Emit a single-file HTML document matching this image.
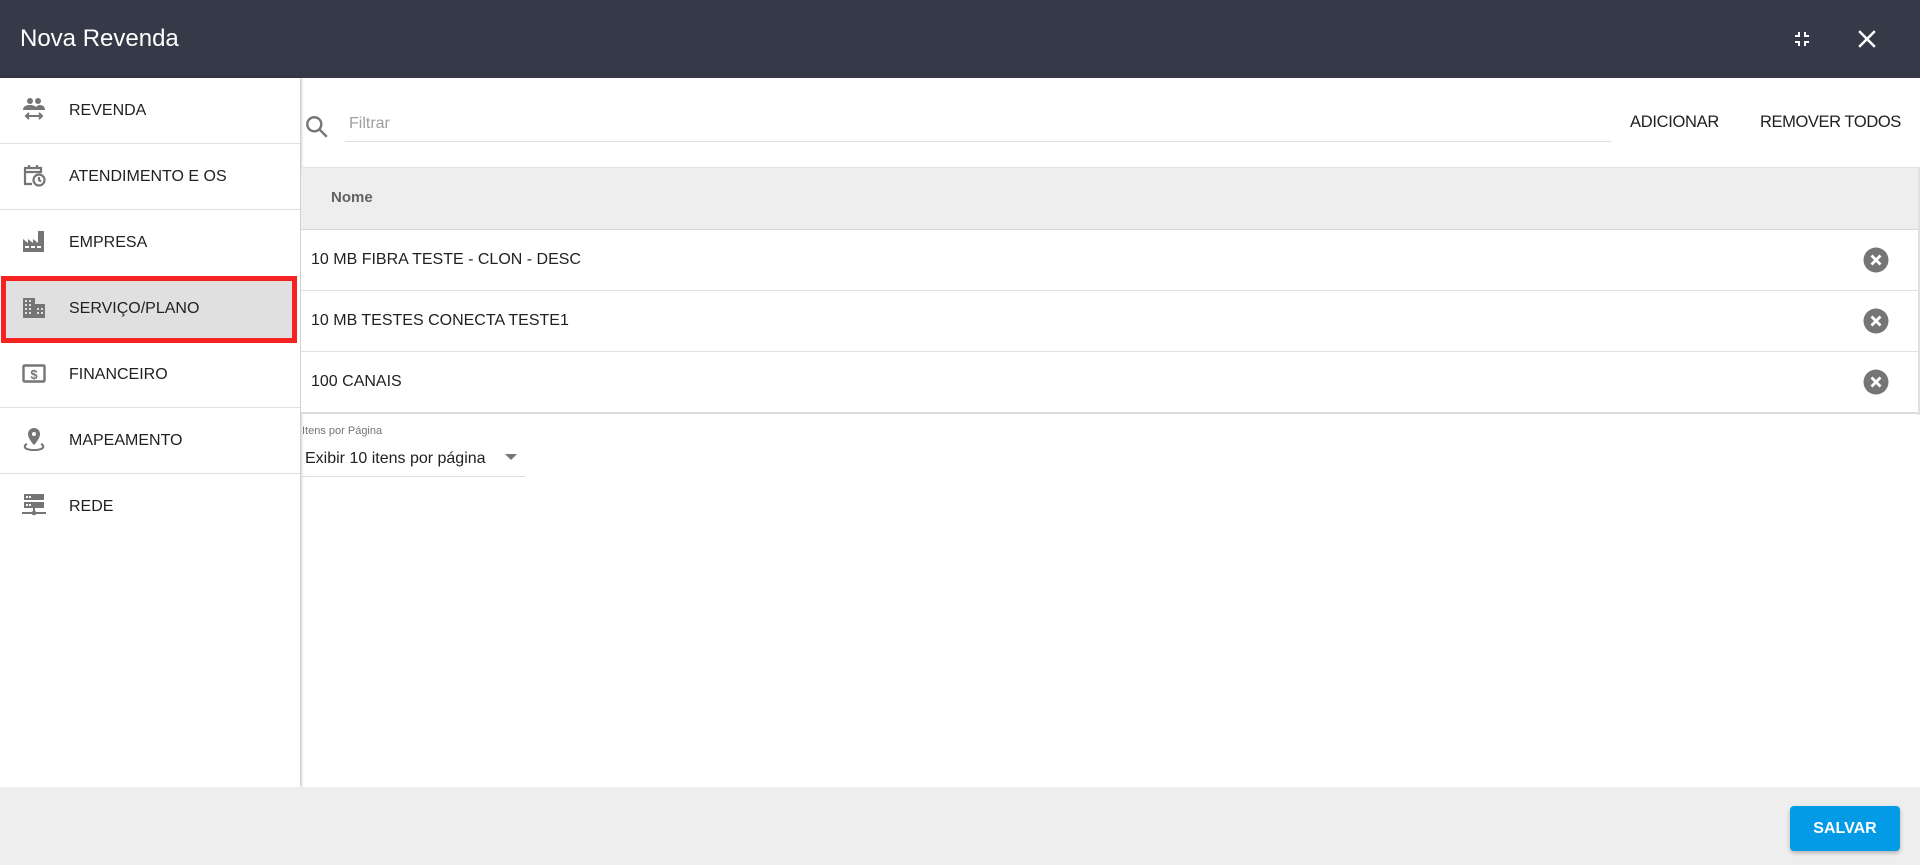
<!DOCTYPE html>
<html><head><meta charset="utf-8"><style>
*{box-sizing:border-box;margin:0;padding:0}
body{width:1920px;height:865px;overflow:hidden;background:#fff;font-family:"Liberation Sans",Roboto,sans-serif;color:#212121;position:relative}
.hdr{position:absolute;left:0;top:0;width:1920px;height:78px;background:#363a48}
.hdr .t{position:absolute;left:20px;top:25px;font-size:24px;color:#fff}
.side{position:absolute;left:0;top:78px;width:300px;height:709px;background:#fff;box-shadow:1px 0 3px rgba(0,0,0,.3)}
.it{position:absolute;left:0;width:300px;height:66px;border-bottom:1px solid #e0e0e0}
.it svg{position:absolute;left:22px;top:19px}
.it span{position:absolute;left:69px;top:24px;font-size:16px;color:#212121}
.sel{position:absolute;left:1px;top:198px;width:296px;height:67px;border:5px solid #f52222;background:#e0e0e0}
.foot{position:absolute;left:0;top:787px;width:1920px;height:78px;background:#eeeeee}
.btn{position:absolute;left:1790px;top:806px;width:110px;height:45px;background:#039be5;border-radius:4px;color:#fff;font-weight:bold;font-size:16px;text-align:center;line-height:45px;box-shadow:0 2px 4px rgba(0,0,0,.25)}
.abs{position:absolute}
.row{position:absolute;left:301px;width:1617px;height:61px;border-bottom:1px solid #e0e0e0;background:#fff}
.row span{position:absolute;left:10px;top:21px;font-size:16px}
.row svg{position:absolute;left:1562px;top:17px}
</style></head><body>
<div class="hdr"><div class="t">Nova Revenda</div>
<svg class="abs" style="left:1790px;top:27px" width="24" height="24" viewBox="0 0 24 24" fill="#fff"><path d="M5 16h3v3h2v-5H5v2zm3-8H5v2h5V5H8v3zm6 11h2v-3h3v-2h-5v5zm2-11V5h-2v5h5V8h-3z"/></svg>
<svg class="abs" style="left:1852px;top:24px" width="30" height="30" viewBox="0 0 24 24" fill="#fff"><path d="M19 6.41L17.590 5 12 10.59 6.41 5 5 6.41 10.59 12 5 17.59 6.41 19 12 13.41 17.59 19 19 17.59 13.41 12z"/></svg>
</div>
<div class="side">
<div class="sel"></div>
<div class="it" style="top:0"><svg width="24" height="24" viewBox="0 0 24 24" fill="#757575"><circle cx="8" cy="4" r="3"/><circle cx="16" cy="4" r="3"/><path d="M1 13c0-4 4-5 7-5s5 1 6 2c1-1 3-2 3-2 3 0 6 1 6 5H1z"/><path d="M5 19h14M7 16l-3 3 3 3M17 16l3 3-3 3" stroke="#757575" stroke-width="2" fill="none"/></svg><span>REVENDA</span></div>
<div class="it" style="top:66px"><svg width="24" height="24" viewBox="0 0 24 24" fill="none" stroke="#757575" stroke-width="2.2"><path d="M10 21H3V5h16v5"/><path d="M3 9h16M7 2v4M15 2v4"/><circle cx="17" cy="17" r="5.5"/><path d="M17 14v3l2 1.5"/></svg><span>ATENDIMENTO E OS</span></div>
<div class="it" style="top:132px;border:none"><svg width="24" height="24" viewBox="0 0 24 24" fill="#757575"><path d="M1 23V10l5 4v-4l5 4v-4l5 4V2h6v21z"/><rect x="3" y="17" width="4" height="2" fill="#fff"/><rect x="9" y="17" width="4" height="2" fill="#fff"/><rect x="15" y="17" width="4" height="2" fill="#fff"/></svg><span>EMPRESA</span></div>
<div class="it" style="top:198px;border:none"><svg width="24" height="24" viewBox="0 0 24 24" fill="#757575"><path d="M1 3h12v6h10v14H1z"/><g fill="#e0e0e0"><rect x="3" y="5" width="2" height="2"/><rect x="7" y="5" width="2" height="2"/><rect x="3" y="9" width="2" height="2"/><rect x="7" y="9" width="2" height="2"/><rect x="3" y="13" width="2" height="2"/><rect x="7" y="13" width="2" height="2"/><rect x="3" y="17" width="2" height="2"/><rect x="7" y="17" width="2" height="2"/><rect x="15" y="13" width="2" height="2"/><rect x="15" y="17" width="2" height="2"/><rect x="19" y="13" width="2" height="2"/><rect x="19" y="17" width="2" height="2"/></g></svg><span>SERVIÇO/PLANO</span></div>
<div class="it" style="top:264px"><svg width="24" height="24" viewBox="0 0 24 24"><rect x="1.5" y="4.5" width="21" height="16" rx="1" fill="none" stroke="#757575" stroke-width="2.4"/><text x="12" y="18" font-size="13" font-weight="bold" text-anchor="middle" fill="#757575" font-family="Liberation Sans">$</text></svg><span>FINANCEIRO</span></div>
<div class="it" style="top:330px"><svg width="24" height="24" viewBox="0 0 24 24" fill="#757575"><path d="M12 1a6 6 0 0 1 6 6c0 5-6 11-6 11S6 12 6 7a6 6 0 0 1 6-6z"/><circle cx="12" cy="7" r="2" fill="#fff"/><path d="M5 17c-3 1-3 4 0 5 4 1.5 10 1.5 14 0 3-1 3-4 0-5" fill="none" stroke="#757575" stroke-width="2"/></svg><span>MAPEAMENTO</span></div>
<div class="it" style="top:396px;border:none"><svg width="24" height="24" viewBox="0 0 24 24" fill="#757575"><rect x="2" y="1" width="20" height="6"/><rect x="2" y="9" width="20" height="6"/><rect x="11" y="15" width="2" height="5"/><rect x="0" y="19" width="24" height="2"/><circle cx="12" cy="20" r="2.3"/><g fill="#fff"><rect x="4" y="3" width="2" height="2"/><rect x="7" y="3" width="2" height="2"/><rect x="4" y="11" width="2" height="2"/><rect x="7" y="11" width="2" height="2"/></g></svg><span>REDE</span></div>
</div>
<svg class="abs" style="left:304px;top:114px" width="26" height="26" viewBox="0 0 24 24" fill="none" stroke="#757575" stroke-width="2.2"><circle cx="9.5" cy="9.5" r="6.5"/><path d="M14.5 14.5L21 21"/></svg>
<div class="abs" style="left:349px;top:115px;font-size:16px;color:#9e9e9e">Filtrar</div>
<div class="abs" style="left:345px;top:141px;width:1266px;height:1px;background:#ddd"></div>
<div class="abs" style="left:1630px;top:113px;font-size:16.5px;letter-spacing:-0.3px">ADICIONAR</div>
<div class="abs" style="left:1760px;top:113px;font-size:16.5px;letter-spacing:-0.4px">REMOVER TODOS</div>
<div class="abs" style="left:301px;top:167px;width:1619px;height:63px;background:#eeeeee;border-top:1px solid #e0e0e0;border-bottom:1px solid #d6d6d6;border-radius:3px 3px 0 0"></div>
<div class="abs" style="left:331px;top:189px;font-size:15px;font-weight:bold;color:#616161">Nome</div>
<div class="row" style="top:230px"><span>10 MB FIBRA TESTE - CLON - DESC</span><svg width="26" height="26" viewBox="0 0 26 26"><circle cx="13" cy="13" r="12.5" fill="#757575"/><path d="M8.5 8.5l9 9M17.5 8.5l-9 9" stroke="#fff" stroke-width="2.8"/></svg></div>
<div class="row" style="top:291px"><span>10 MB TESTES CONECTA TESTE1</span><svg width="26" height="26" viewBox="0 0 26 26"><circle cx="13" cy="13" r="12.5" fill="#757575"/><path d="M8.5 8.5l9 9M17.5 8.5l-9 9" stroke="#fff" stroke-width="2.8"/></svg></div>
<div class="row" style="top:352px;height:62px;border-bottom:2px solid #ddd"><span>100 CANAIS</span><svg width="26" height="26" viewBox="0 0 26 26"><circle cx="13" cy="13" r="12.5" fill="#757575"/><path d="M8.5 8.5l9 9M17.5 8.5l-9 9" stroke="#fff" stroke-width="2.8"/></svg></div>
<div class="abs" style="left:1918px;top:167px;width:2px;height:248px;background:#e0e0e0"></div>
<div class="abs" style="left:302px;top:425px;font-size:11px;color:#757575">Itens por Página</div>
<div class="abs" style="left:305px;top:450px;font-size:16px">Exibir 10 itens por página</div>
<svg class="abs" style="left:504px;top:453px" width="14" height="8" viewBox="0 0 14 8"><path d="M1 1h12L7 7z" fill="#757575"/></svg>
<div class="abs" style="left:301px;top:476px;width:224px;height:1px;background:#ddd"></div>
<div class="foot"></div>
<div class="btn">SALVAR</div>
</body></html>
